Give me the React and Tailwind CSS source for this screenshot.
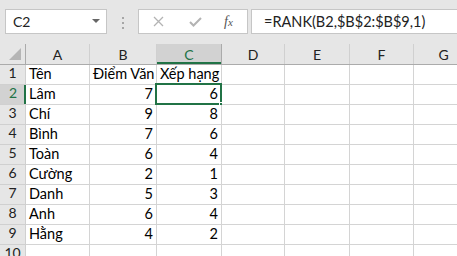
import React from 'react';

const cols = [
  { key: 'A', w: 'w-[64px]' },
  { key: 'B', w: 'w-[67px]' },
  { key: 'C', w: 'w-[65px]' },
  { key: 'D', w: 'w-[63px]' },
  { key: 'E', w: 'w-[65px]' },
  { key: 'F', w: 'w-[64px]' },
  { key: 'G', w: 'w-[60px]' },
];

const rows = [
  ['Tên', 'Điểm Văn', 'Xếp hạng'],
  ['Lâm', 7, 6],
  ['Chí', 9, 8],
  ['Bình', 7, 6],
  ['Toàn', 6, 4],
  ['Cường', 2, 1],
  ['Danh', 5, 3],
  ['Anh', 6, 4],
  ['Hằng', 4, 2],
  ['', '', ''],
];

const cellFont = { fontFamily: 'Lato, "Liberation Sans", sans-serif' };

function FormulaBar() {
  return (
    <div className="flex h-[44px] items-start bg-[#e6e6e6] pt-[9px]" style={{ fontFamily: '"Liberation Sans", sans-serif' }}>
      <div className="ml-[5px] flex h-[25px] w-[102px] items-center justify-between border border-[#c6c6c6] bg-white pl-[7px] pr-[6px]">
        <span className="text-[14px] text-[#222]" style={cellFont}>C2</span>
        <svg width="8" height="5" viewBox="0 0 8 5">
          <path d="M0 0 L8 0 L4 4 Z" fill="#666" />
        </svg>
      </div>
      <div className="flex w-[31px] flex-col items-center gap-[3px] pt-[8px]">
        <span className="h-[2px] w-[2px] bg-[#a6a6a6]" />
        <span className="h-[2px] w-[2px] bg-[#a6a6a6]" />
        <span className="h-[2px] w-[2px] bg-[#a6a6a6]" />
      </div>
      <div className="flex h-[25px] w-[110px] items-center border border-[#c6c6c6] bg-white">
        <svg className="ml-[14px]" width="11" height="11" viewBox="0 0 11 11">
          <path d="M1 1 L10 10 M10 1 L1 10" stroke="#b3b3b3" strokeWidth="1.3" />
        </svg>
        <svg className="ml-[25px]" width="13" height="10" viewBox="0 0 13 10">
          <path d="M1 5 L4.5 8.5 L12 1" stroke="#b3b3b3" strokeWidth="2" fill="none" />
        </svg>
        <span className="ml-[22px] text-[14px] italic text-[#555]" style={{ fontFamily: '"Liberation Serif", serif' }}>
          f<span className="text-[11px]">x</span>
        </span>
      </div>
      <div className="ml-[3px] flex h-[25px] flex-1 items-center border border-r-0 border-[#c6c6c6] bg-white pl-[12px]">
        <span className="text-[14.5px] text-[#222]" style={cellFont}>=RANK(B2,$B$2:$B$9,1)</span>
      </div>
    </div>
  );
}

function HeaderRow() {
  return (
    <div className="flex h-[21px] border-b border-[#ababab] bg-[#e6e6e6]" style={cellFont}>
      <div className="relative w-[26px] shrink-0 border-r border-[#ababab]">
        <svg className="absolute bottom-[4px] right-[4px]" width="12" height="12" viewBox="0 0 12 12">
          <path d="M12 0 L12 12 L0 12 Z" fill="#b5b5b5" />
        </svg>
      </div>
      {cols.map((c) => {
        const sel = c.key === 'C';
        return (
          <div
            key={c.key}
            className={
              sel
                ? `${c.w} shrink-0 flex items-center justify-center border-r border-[#ababab] bg-[#d2d2d2] text-[14px] text-[#217346] shadow-[inset_0_-2px_0_#217346]`
                : `${c.w} shrink-0 flex items-center justify-center border-r border-[#d0d0d0] text-[14px] text-[#222]`
            }
          >
            {c.key}
          </div>
        );
      })}
    </div>
  );
}

function DataRow({ idx, data }) {
  const sel = idx === 2;
  return (
    <div className="flex h-[20px]" style={cellFont}>
      <div
        className={
          sel
            ? 'w-[26px] shrink-0 flex items-end justify-center border-b border-[#d0d0d0] bg-[#d2d2d2] pb-[1px] text-[14px] text-[#217346] shadow-[inset_-2px_0_0_#217346]'
            : 'w-[26px] shrink-0 flex items-end justify-center border-b border-r border-[#d0d0d0] bg-[#e6e6e6] pb-[1px] text-[14px] text-[#222]'
        }
      >
        {idx}
      </div>
      {cols.map((c, i) => {
        const v = data[i];
        const isNum = typeof v === 'number';
        return (
          <div
            key={c.key}
            className={`${c.w} relative shrink-0 flex items-end border-b border-r border-[#d4d4d4] bg-white px-[3px] pb-[1px] text-[14.5px] text-black ${isNum ? 'justify-end' : 'justify-start'}`}
          >
            {v !== undefined ? <span className="whitespace-nowrap leading-[18px]">{v}</span> : null}
            {sel && c.key === 'C' ? (
              <>
                <div className="pointer-events-none absolute -left-[2px] -top-[2px] h-[22px] w-[67px] border-2 border-[#217346]" />
                <div className="absolute -bottom-[4px] -right-[4px] h-[6px] w-[6px] border border-white bg-[#217346]" />
              </>
            ) : null}
          </div>
        );
      })}
    </div>
  );
}

export default function App() {
  return (
    <div className="h-[256px] w-[457px] overflow-hidden bg-white">
      <FormulaBar />
      <HeaderRow />
      {rows.map((r, i) => (
        <DataRow key={i} idx={i + 1} data={r} />
      ))}
    </div>
  );
}
